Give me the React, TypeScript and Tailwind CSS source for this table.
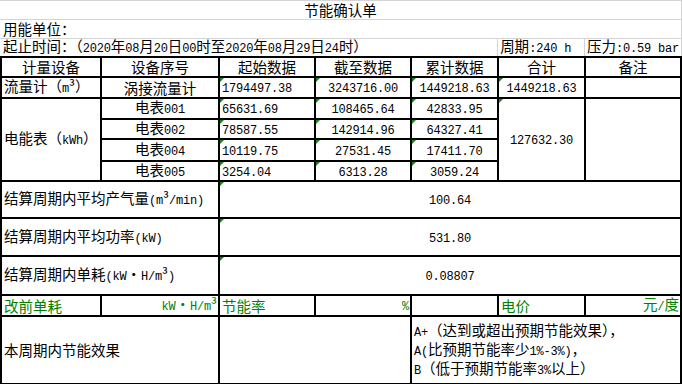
import type { ReactNode } from "react";

const ascii = /^[\x20-\x7e]+$/;

// 半角字符用等宽字体，模拟宋体的半角数字
const Mix = ({ text }: { text: string }) => (
  <>
    {text.split(/([\x20-\x7e]+)/).map((part, i) =>
      ascii.test(part) ? (
        <span key={i} className="font-['Liberation_Mono',monospace] text-[12px] tracking-[-0.2px]">
          {part}
        </span>
      ) : (
        part
      )
    )}
  </>
);

const Cell = ({
  children,
  className = "",
  flag = false,
}: {
  children?: ReactNode;
  className?: string;
  flag?: boolean;
}) => (
  <div className={`relative flex items-center bg-white px-[2px] whitespace-pre ${className}`}>
    {flag && (
      <span className="absolute left-0 top-0 w-0 h-0 border-t-[4px] border-r-[4px] border-t-[#168a16] border-r-transparent" />
    )}
    <span className="leading-[14px]">{children}</span>
  </div>
);

const meters = [
  { no: "电表001", start: "65631.69", end: "108465.64", sum: "42833.95" },
  { no: "电表002", start: "78587.55", end: "142914.96", sum: "64327.41" },
  { no: "电表004", start: "10119.75", end: "27531.45", sum: "17411.70" },
  { no: "电表005", start: "3254.04", end: "6313.28", sum: "3059.24" },
];

const stats = [
  { label: "结算周期内平均产气量(m³/min)", value: "100.64" },
  { label: "结算周期内平均功率(kW)", value: "531.80" },
  { label: "结算周期内单耗(kW·H/m³)", value: "0.08807" },
];

const App = () => {
  return (
    <div className="w-[682px] h-[384px] bg-white text-black text-[14.5px] leading-[14px] font-['Noto_Sans_CJK_SC',sans-serif] overflow-hidden">
      {/* 表头信息 */}
      <div className="border-t border-r border-[#d4d4d4]">
        <div className="h-[19px] flex items-center justify-center border-b border-[#d4d4d4]">节能确认单</div>
        <div className="h-[19px] flex items-center px-[3px] border-b border-[#d4d4d4]">用能单位：</div>
        <div className="h-[17px] flex">
          <div className="w-[499px] flex items-center px-[3px] whitespace-pre border-r border-[#d4d4d4]">
            <span className="leading-[14px]">
              <Mix text="起止时间：（2020年08月20日00时至2020年08月29日24时）" />
            </span>
          </div>
          <div className="w-[87px] flex items-center px-[2px] whitespace-pre border-r border-[#d4d4d4]">
            <span className="leading-[14px]">
              <Mix text="周期:240 h" />
            </span>
          </div>
          <div className="flex-1 flex items-center px-[2px] whitespace-pre">
            <span className="leading-[14px]">
              <Mix text="压力:0.59 bar" />
            </span>
          </div>
        </div>
      </div>

      {/* 数据表 */}
      <div className="grid bg-black p-[2px] gap-[2px] grid-cols-[98px_116px_94px_94px_85px_85px_94px] grid-rows-[18px_19px_19px_18px_20px_18px_35px_36px_37px_19px_66px]">
        {["计量设备", "设备序号", "起始数据", "截至数据", "累计数据", "合计", "备注"].map((h) => (
          <Cell key={h} className="justify-center">
            {h}
          </Cell>
        ))}

        <Cell>
          <Mix text="流量计（m³）" />
        </Cell>
        <Cell className="justify-center">涡接流量计</Cell>
        <Cell flag>
          <Mix text="1794497.38" />
        </Cell>
        <Cell flag className="justify-center">
          <Mix text="3243716.00" />
        </Cell>
        <Cell flag className="justify-center">
          <Mix text="1449218.63" />
        </Cell>
        <Cell flag className="justify-center">
          <Mix text="1449218.63" />
        </Cell>
        <Cell />

        {meters.map((m, i) => (
          <>
            {i === 0 && (
              <Cell key="label" className="row-span-4">
                <Mix text="电能表（kWh）" />
              </Cell>
            )}
            <Cell key={m.no} className="justify-center">
              <Mix text={m.no} />
            </Cell>
            <Cell key={m.no + "s"} flag>
              <Mix text={m.start} />
            </Cell>
            <Cell key={m.no + "e"} flag className="justify-center">
              <Mix text={m.end} />
            </Cell>
            <Cell key={m.no + "t"} flag className="justify-center">
              <Mix text={m.sum} />
            </Cell>
            {i === 0 && (
              <>
                <Cell key="total" flag className="row-span-4 justify-center">
                  <Mix text="127632.30" />
                </Cell>
                <Cell key="note" className="row-span-4" />
              </>
            )}
          </>
        ))}

        {stats.map((s) => (
          <>
            <Cell key={s.label} className="col-span-2">
              <Mix text={s.label} />
            </Cell>
            <Cell key={s.label + "v"} flag className="col-span-5 justify-center">
              <Mix text={s.value} />
            </Cell>
          </>
        ))}

        <Cell className="text-[#008000]">改前单耗</Cell>
        <Cell className="justify-end pr-[1px] text-[#008000]">
          <Mix text="kW·H/m³" />
        </Cell>
        <Cell className="text-[#008000]">节能率</Cell>
        <Cell className="justify-end pr-[1px] text-[#008000]">
          <Mix text="%" />
        </Cell>
        <Cell />
        <Cell className="text-[#008000]">电价</Cell>
        <Cell className="justify-end pr-[1px] text-[#008000]">
          <Mix text="元/度" />
        </Cell>

        <Cell className="col-span-2">本周期内节能效果</Cell>
        <Cell className="col-span-2" />
        <div className="col-span-3 flex flex-col justify-center bg-white px-[2px] whitespace-pre leading-[15px]">
          <div>
            <Mix text="A+（达到或超出预期节能效果），" />
          </div>
          <div>
            <Mix text="A(比预期节能率少1%-3%)，" />
          </div>
          <div>
            <Mix text="B（低于预期节能率3%以上）" />
          </div>
        </div>
      </div>
    </div>
  );
};

export default App;
